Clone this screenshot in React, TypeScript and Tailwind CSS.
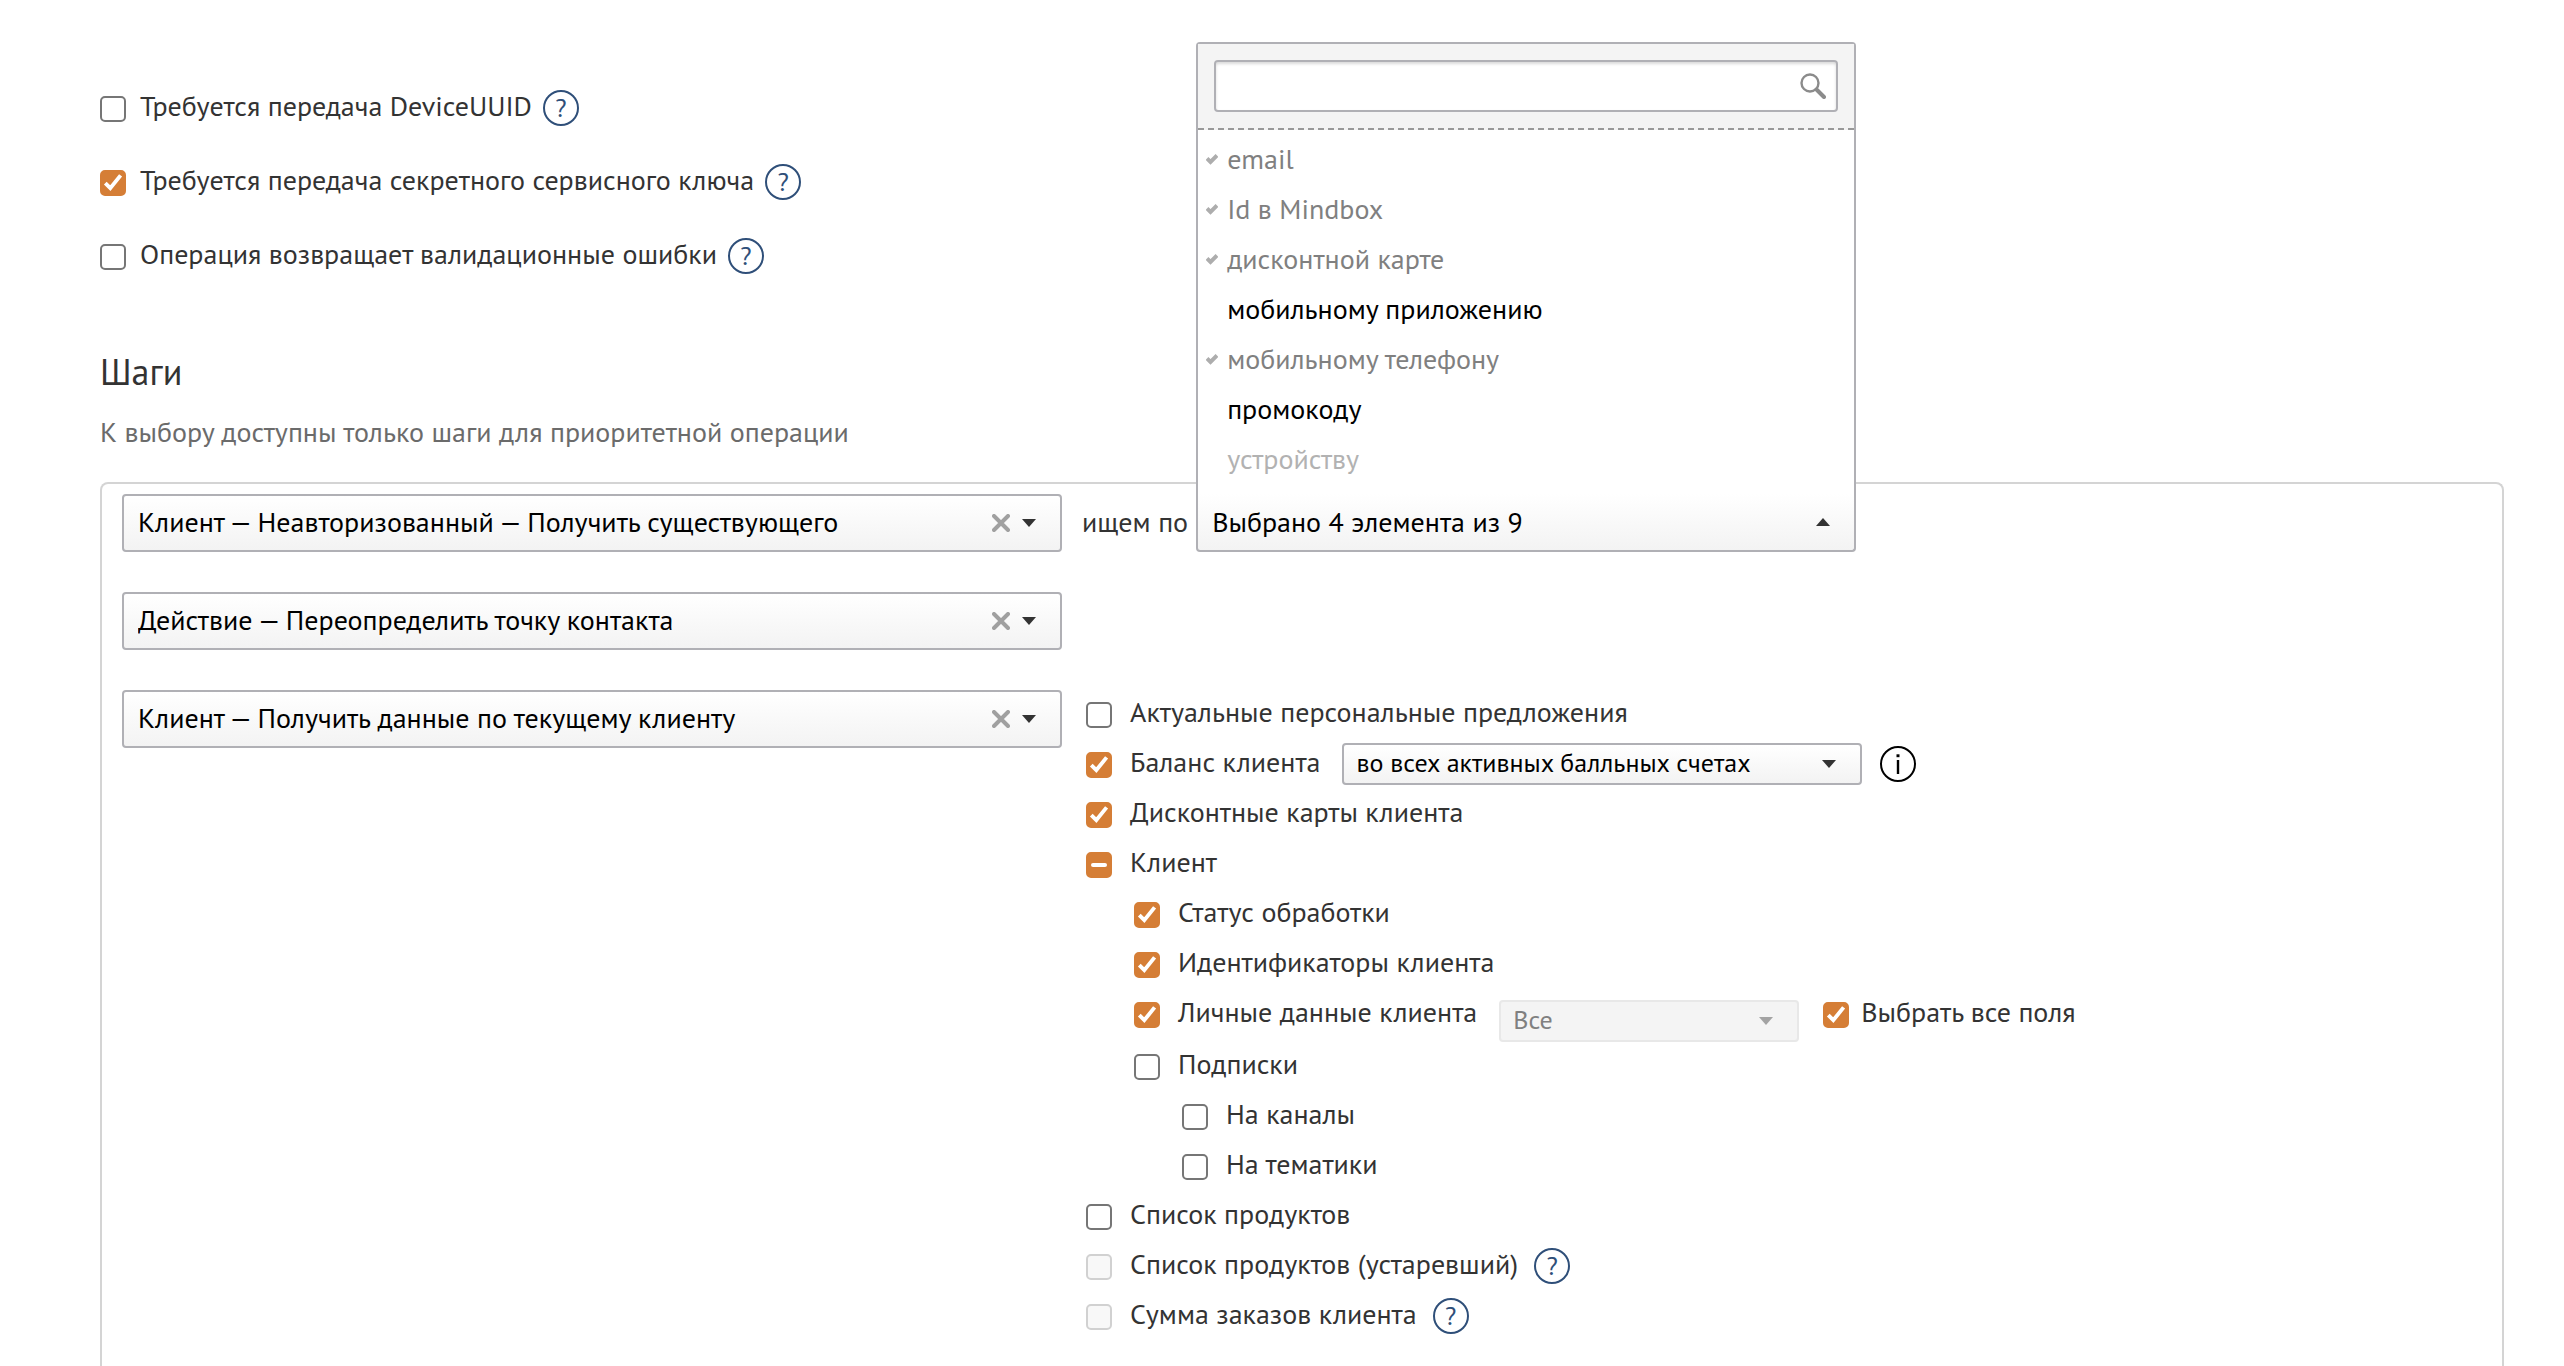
import { useState, type ReactNode } from 'react';
import clsx from 'clsx';

type CheckState = 'off' | 'on' | 'mixed';

const stepOptions = [
  'Клиент — Неавторизованный — Получить существующего',
  'Действие — Переопределить точку контакта',
  'Клиент — Получить данные по текущему клиенту',
];

const identifiers = [
  { name: 'email', state: 'selected' },
  { name: 'Id в Mindbox', state: 'selected' },
  { name: 'дисконтной карте', state: 'selected' },
  { name: 'мобильному приложению', state: 'free' },
  { name: 'мобильному телефону', state: 'selected' },
  { name: 'промокоду', state: 'free' },
  { name: 'устройству', state: 'disabled' },
];

const Checkbox = ({ id, initial = 'off', disabled }: { id: string; initial?: CheckState; disabled?: boolean }) => {
  const [state, setState] = useState<CheckState>(initial);

  return (
    <span className="mt-3 grid size-[26px] shrink-0">
      <input
        id={id}
        type="checkbox"
        disabled={disabled}
        checked={state === 'on'}
        ref={(el) => {
          if (el) el.indeterminate = state === 'mixed';
        }}
        onChange={() => setState(state === 'on' ? 'off' : 'on')}
        className="col-start-1 row-start-1 size-[26px] appearance-none rounded-[5px] border-2 border-[#767676] bg-white checked:border-[#d57e36] checked:bg-[#d57e36] indeterminate:border-[#d57e36] indeterminate:bg-[#d57e36] disabled:border-[#d1d1d1] disabled:bg-[#f8f8f8]"
      />
      {state !== 'off' && (
        <svg viewBox="0 0 26 26" className="pointer-events-none col-start-1 row-start-1 size-[26px]" fill="none" stroke="#fff">
          {state === 'on' ? (
            <path d="M5.3 13.2 10.3 18.2 20.6 5.4" strokeWidth="3.9" />
          ) : (
            <path d="M7 13h12" strokeWidth="4" strokeLinecap="round" />
          )}
        </svg>
      )}
    </span>
  );
};

const HelpButton = () => (
  <button
    type="button"
    aria-label="Справка"
    className="mt-1.5 flex size-9 shrink-0 items-center justify-center rounded-full border-2 border-[#2f4f79] text-[26px] leading-8 text-[#2f4f79]"
  >
    ?
  </button>
);

const InfoButton = () => (
  <button type="button" aria-label="Информация" className="mt-1.5 size-9 shrink-0">
    <svg viewBox="0 0 36 36" className="size-9" fill="none" stroke="#000" strokeWidth="2">
      <circle cx="18" cy="18" r="17" />
      <path d="M18 14v14" strokeWidth="2.4" />
      <path d="M18 8.300v2.900" strokeWidth="3" />
    </svg>
  </button>
);

const Arrow = ({ className, up }: { className?: string; up?: boolean }) => (
  <svg viewBox="0 0 14 8" className={clsx('pointer-events-none h-2 w-3.5', className)} fill="currentColor">
    <path d={up ? 'M7 0 14 8H0z' : 'M0 0h14L7 8z'} />
  </svg>
);

const StepSelect = ({ value, index }: { value: string; index: number }) => (
  <div className="grid h-[58px] w-[940px] shrink items-center">
    <select
      aria-label={`Шаг ${index + 1}`}
      defaultValue={value}
      className="col-start-1 row-start-1 h-full w-full appearance-none rounded border-2 border-[#b0b0b5] bg-linear-to-b from-white to-[#f3f3f3] pr-20 pb-0.5 pl-3.5 text-black"
    >
      {stepOptions.map((name) => (
        <option key={name}>{name}</option>
      ))}
    </select>
    <div className="pointer-events-none col-start-1 row-start-1 flex items-center gap-3 justify-self-end pr-[26px]">
      <button type="button" aria-label="Очистить" className="pointer-events-auto">
        <svg viewBox="0 0 18 18" className="size-[18px]" stroke="#a0a0a0" strokeWidth="4" strokeLinecap="round">
          <path d="M2 2l14 14M16 2 2 16" />
        </svg>
      </button>
      <Arrow className="text-[#333]" />
    </div>
  </div>
);

const SmallSelect = ({ label, value, disabled, className }: { label: string; value: string; disabled?: boolean; className?: string }) => (
  <div className={clsx('grid h-[42px] items-center', className)}>
    <select
      aria-label={label}
      disabled={disabled}
      className="col-start-1 row-start-1 h-full w-full appearance-none rounded border-2 border-[#b0b0b5] bg-linear-to-b from-white to-[#f3f3f3] pr-12 pb-0.5 pl-3 text-[26px] leading-9 text-black disabled:border-[#e8e8e8] disabled:bg-[#f4f4f4] disabled:bg-none disabled:text-[#808080] disabled:opacity-100"
    >
      <option>{value}</option>
    </select>
    <Arrow className={clsx('col-start-1 row-start-1 mr-[26px] justify-self-end', disabled ? 'text-[#a3a3a3]' : 'text-[#333]')} />
  </div>
);

const IdentifierPicker = () => (
  <div className="relative w-[660px]">
    <div className="absolute inset-x-0 bottom-full rounded-t border-2 border-b-0 border-[#b0b0b5] bg-white">
      <div className="grid items-center border-b-2 border-dashed border-[#999] bg-[#f4f4f4] p-4">
        <input
          type="text"
          aria-label="Поиск"
          className="col-start-1 row-start-1 h-[52px] w-full rounded border-2 border-[#b0b0b5] bg-white pr-12 pl-3 shadow-[inset_0_2px_3px_rgba(0,0,0,0.15)]"
        />
        <svg viewBox="0 0 26 26" className="pointer-events-none col-start-1 row-start-1 mr-3 size-[26px] justify-self-end" fill="none" stroke="#8b8b8b">
          <circle cx="10" cy="10" r="8.5" strokeWidth="2.4" />
          <path d="m16.500 16.500 7.500 7.500" strokeWidth="4" strokeLinecap="round" />
        </svg>
      </div>
      <ul className="pt-1 pb-2.5">
        {identifiers.map(({ name, state }) => (
          <li
            key={name}
            className={clsx('flex h-[50px] items-center pl-2', {
              'text-[#808080]': state === 'selected',
              'text-black': state === 'free',
              'text-[#b2b2b2]': state === 'disabled',
            })}
          >
            <span className="w-[21px] shrink-0">
              {state === 'selected' && (
                <svg viewBox="0 0 12 11" className="h-[11px] w-3" fill="none" stroke="#adadad" strokeWidth="4">
                  <path d="M1 4.500 4.500 8 11 1.500" />
                </svg>
              )}
            </span>
            {name}
          </li>
        ))}
      </ul>
    </div>
    <button
      type="button"
      className="flex h-[58px] w-full items-center justify-between rounded-b border-2 border-t-0 border-[#b0b0b5] bg-linear-to-b from-white to-[#f3f3f3] pr-6 pl-3.5 text-black"
    >
      Выбрано 4 элемента из 9
      <Arrow up className="text-[#333]" />
    </button>
  </div>
);

type OptionProps = {
  id: string;
  label: string;
  state?: CheckState;
  disabled?: boolean;
  level?: 0 | 1 | 2;
  children?: ReactNode;
};

const Option = ({ id, label, state, disabled, level = 0, children }: OptionProps) => (
  <div className={clsx('flex min-h-[50px] items-start', level === 1 && 'pl-12', level === 2 && 'pl-24')}>
    <Checkbox id={id} initial={state} disabled={disabled} />
    <label htmlFor={id} className="pl-[18px]">
      {label}
    </label>
    {children}
  </div>
);

const ClientData = () => (
  <div className="pl-6">
    <Option id="offers" label="Актуальные персональные предложения" />
    <Option id="balance" label="Баланс клиента" state="on">
      <SmallSelect label="Балльные счета" value="во всех активных балльных счетах" className="mt-[3px] ml-[22px] w-[520px]" />
      <div className="flex pl-[18px]">
        <InfoButton />
      </div>
    </Option>
    <Option id="cards" label="Дисконтные карты клиента" state="on" />
    <Option id="client" label="Клиент" state="mixed" />
    <Option id="status" label="Статус обработки" state="on" level={1} />
    <Option id="ids" label="Идентификаторы клиента" state="on" level={1} />
    <Option id="personal" label="Личные данные клиента" state="on" level={1}>
      <SmallSelect label="Поля" value="Все" disabled className="mt-2.5 mr-6 ml-[22px] w-[300px]" />
      <Checkbox id="all-fields" initial="on" />
      <label htmlFor="all-fields" className="pl-3">
        Выбрать все поля
      </label>
    </Option>
    <Option id="subscriptions" label="Подписки" level={1} />
    <Option id="channels" label="На каналы" level={2} />
    <Option id="topics" label="На тематики" level={2} />
    <Option id="products" label="Список продуктов" />
    <Option id="products-old" label="Список продуктов (устаревший)" disabled>
      <div className="flex pl-4">
        <HelpButton />
      </div>
    </Option>
    <Option id="orders-sum" label="Сумма заказов клиента" disabled>
      <div className="flex pl-4">
        <HelpButton />
      </div>
    </Option>
  </div>
);

const Setting = ({ id, label, state }: { id: string; label: string; state?: CheckState }) => (
  <div className="flex items-start">
    <Checkbox id={id} initial={state} />
    <label htmlFor={id} className="pr-[11px] pl-3.5">
      {label}
    </label>
    <HelpButton />
  </div>
);

export default function App() {
  return (
    <main className="flex min-h-screen flex-col bg-white pt-[84px] pr-[60px] pl-[100px] font-['PT_Sans','Noto_Sans',sans-serif] text-[28px] leading-11 text-[#333]">
      <div className="flex flex-col gap-[30px]">
        <Setting id="device-uuid" label="Требуется передача DeviceUUID" />
        <Setting id="secret-key" label="Требуется передача секретного сервисного ключа" state="on" />
        <Setting id="validation" label="Операция возвращает валидационные ошибки" />
      </div>

      <h2 className="mt-[74px] text-4xl leading-11">Шаги</h2>
      <p className="mt-4 text-[#6b6b6b]">К выбору доступны только шаги для приоритетной операции</p>

      <section className="mt-7 flex grow flex-col gap-10 rounded-t-lg border-2 border-b-0 border-[#d4d4d4] px-5 pt-2.5 pb-4">
        <div className="flex items-center">
          <StepSelect value={stepOptions[0]} index={0} />
          <span className="pr-2 pb-0.5 pl-5">ищем по</span>
          <IdentifierPicker />
        </div>
        <div className="flex">
          <StepSelect value={stepOptions[1]} index={1} />
        </div>
        <div className="flex items-start">
          <StepSelect value={stepOptions[2]} index={2} />
          <ClientData />
        </div>
      </section>
    </main>
  );
}
